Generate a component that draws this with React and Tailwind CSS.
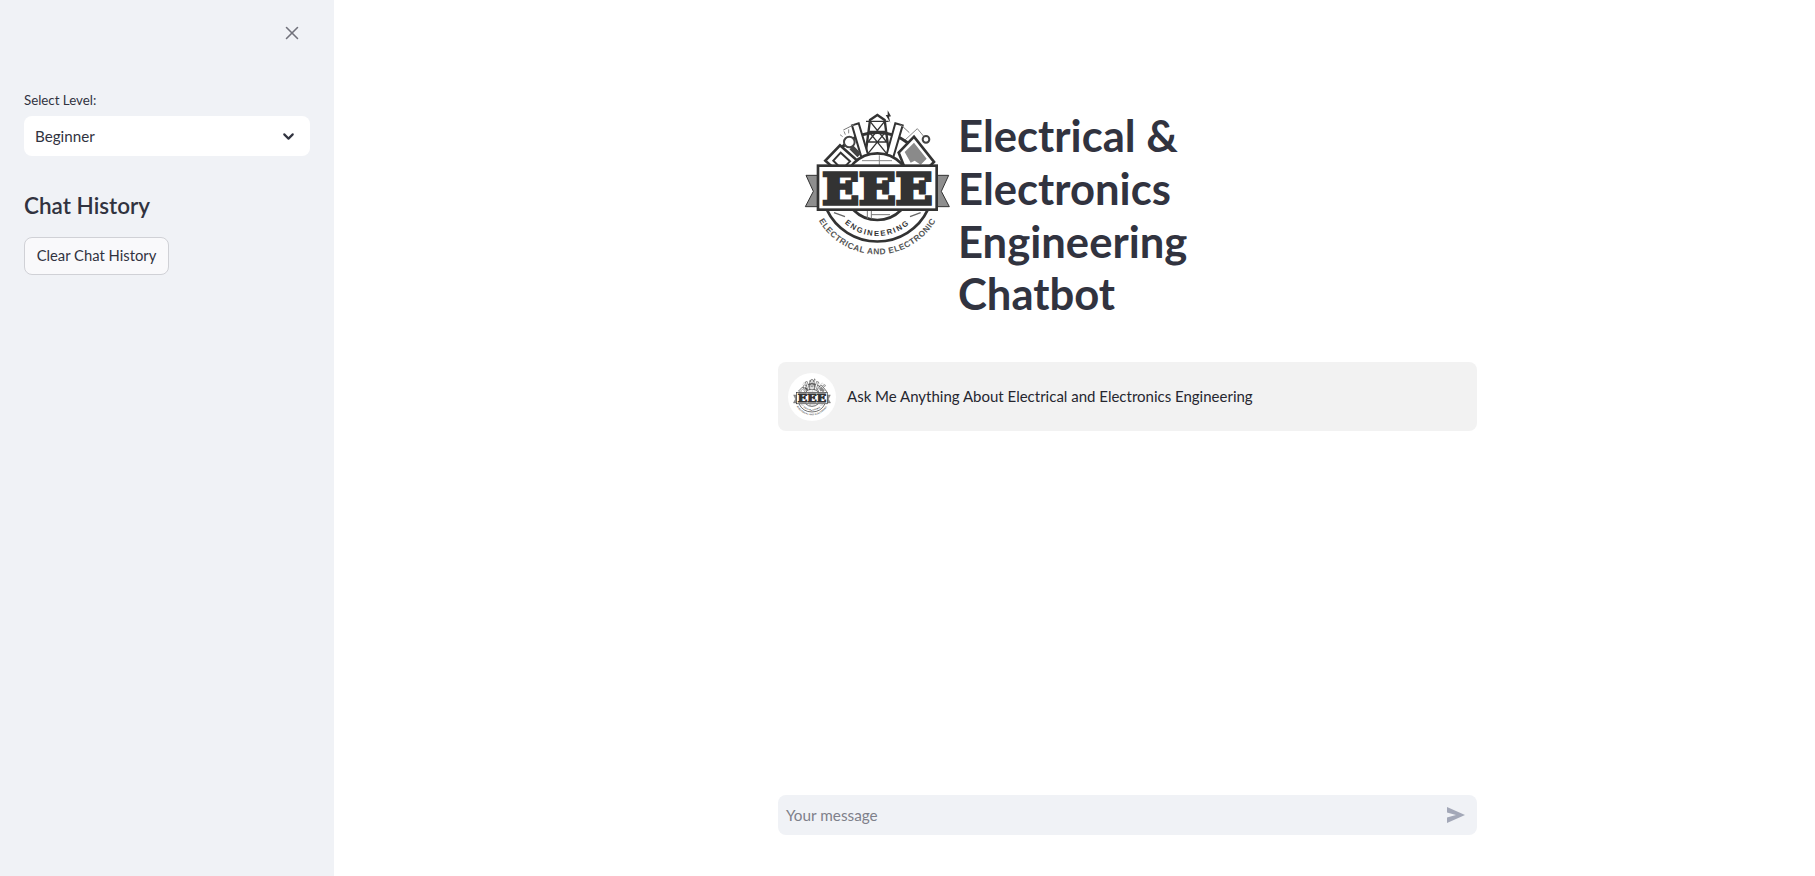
import { ChevronDown, X } from "lucide-react";

const Logo = ({ id, className }) => (
  <svg viewBox="30 20 465 465" className={className} aria-hidden="true">
    <defs>
      <path id={`${id}-inner`} d="M117 265 A145 145 0 0 0 407 265" />
      <path id={`${id}-outer`} d="M66 315 A203 203 0 0 0 458 315" />
    </defs>

    {/* wire and plug on the right */}
    <path d="M345 122 L382 88 L402 112" fill="none" stroke="#888" strokeWidth="3" />
    <circle cx="408" cy="120" r="10" fill="#fff" stroke="#444" strokeWidth="6" />

    {/* upper arc */}
    <path d="M116 215 A150 150 0 0 1 408 215" fill="none" stroke="#333" strokeWidth="9" />

    {/* tower */}
    <g fill="none" stroke="#333">
      <path d="M226 170 L240 62 L262 47 L284 62 L298 170" strokeWidth="7" />
      <path d="M228 66 H296 M236 96 H288 M232 128 H292 M240 66 L290 128 M284 66 L234 128 M236 96 L292 165 M288 96 L232 165" strokeWidth="4" />
    </g>
    <path d="M293 33 L303 51 L297 52 L301 70 L287 47 L293 47 Z" fill="#333" />
    <path d="M186 78 L206 72 L236 172 L216 180 Z" fill="#fff" stroke="#333" strokeWidth="6" />
    <path d="M316 72 L338 78 L308 180 L288 172 Z" fill="#fff" stroke="#333" strokeWidth="6" />
    <path d="M192 76 L160 92 M332 76 L358 100" stroke="#777" strokeWidth="3" />

    {/* bulb */}
    <path d="M162 96 L166 106 M176 90 L176 102 M150 106 L158 112" stroke="#888" strokeWidth="3" />
    <circle cx="178" cy="128" r="16" fill="#fff" stroke="#444" strokeWidth="6" />
    <path d="M184 144 L208 168" stroke="#444" strokeWidth="16" />

    {/* chip on the left */}
    <path d="M106 184 L150 138 L204 186 L160 232 Z" fill="#fff" stroke="#333" strokeWidth="8" />
    <path d="M130 184 L152 160 L180 186 L156 210 Z" fill="#fff" stroke="#333" strokeWidth="6" />

    {/* meter on the right */}
    <path d="M326 160 L372 112 L432 188 L400 220 H350 Z" fill="#fff" stroke="#333" strokeWidth="8" />
    <path d="M344 158 L372 130 L410 178 L392 196 L374 184 L362 190 Z" fill="#8a8a8a" />

    {/* inner disc */}
    <circle cx="262" cy="262" r="100" fill="#fff" stroke="#333" strokeWidth="8" />
    <path d="M216 184 H306 M268 168 V198" stroke="#888" strokeWidth="3" fill="none" />

    {/* ribbon tails */}
    <path d="M84 228 H48 L70 276 L46 322 H84 Z" fill="#8e8e8e" stroke="#333" strokeWidth="3" />
    <path d="M440 228 H476 L454 276 L478 322 H440 Z" fill="#8e8e8e" stroke="#333" strokeWidth="3" />

    {/* lower ring */}
    <path d="M110 330 A168 168 0 0 0 414 330" fill="none" stroke="#333" strokeWidth="8" />
    <path d="M132 340 L165 352 M392 340 L360 352" stroke="#666" strokeWidth="4" fill="none" />
    <path d="M232 332 V358 M244 332 V358 M244 346 H300" stroke="#777" strokeWidth="3" fill="none" />

    {/* banner */}
    <rect x="84" y="199" width="356" height="132" fill="#fff" stroke="#333" strokeWidth="8" />
    <text
      x="262"
      y="314"
      textAnchor="middle"
      textLength="330"
      lengthAdjust="spacingAndGlyphs"
      fill="#333"
      stroke="#333"
      strokeWidth="10"
      fontFamily="'DejaVu Serif', serif"
      fontWeight="700"
      fontSize="130"
    >
      EEE
    </text>

    {/* ring lettering */}
    <text fill="#333" fontFamily="'Liberation Sans', sans-serif" fontWeight="700" fontSize="23">
      <textPath href={`#${id}-inner`} startOffset="50%" textAnchor="middle" letterSpacing="5">
        ENGINEERING
      </textPath>
    </text>
    <text fill="#555" fontFamily="'Liberation Sans', sans-serif" fontWeight="700" fontSize="25">
      <textPath href={`#${id}-outer`} startOffset="50%" textAnchor="middle" letterSpacing="1.5">
        ELECTRICAL AND ELECTRONIC
      </textPath>
    </text>
  </svg>
);

const App = () => {
  return (
    <div className="flex h-[876px] overflow-hidden bg-white font-['Lato','Noto_Sans',sans-serif] text-[#31333f]">
      <aside className="flex w-[334px] shrink-0 flex-col bg-[#f0f2f6] px-6">
        <div className="flex justify-end pt-[22px] pr-[7px]">
          <X className="h-[22px] w-[22px] text-[#71727c]" strokeWidth={1.7} />
        </div>
        <label className="mt-[46px] text-[13.3px] leading-[20px]">Select Level:</label>
        <div className="mt-[6px] flex h-10 items-center justify-between rounded-lg bg-white pr-[13px] pl-[11px] text-[15.2px]">
          <span className="pt-[1px]">Beginner</span>
          <ChevronDown className="h-[17px] w-[17px] text-[#31333f]" strokeWidth={3} />
        </div>
        <h2 className="mt-[34px] text-[22.5px] leading-[32px] font-semibold">Chat History</h2>
        <button
          type="button"
          className="mt-[15px] h-[38px] w-[145px] rounded-lg border border-[#d0d1d6] bg-[#f9f9fb] pb-[2px] text-[14.8px]"
        >
          Clear Chat History
        </button>
      </aside>

      <main className="ml-[444px] flex w-[699px] flex-col">
        <div className="mt-[106px] flex items-start">
          <Logo id="main-logo" className="ml-[22px] h-[155px] w-[155px] shrink-0" />
          <h1 className="ml-[3px] w-[300px] pt-[3px] text-[43.6px] leading-[52.8px] font-bold">
            Electrical &amp; Electronics Engineering Chatbot
          </h1>
        </div>

        <div className="mt-[42px] flex h-[69px] items-center rounded-lg bg-[#f2f2f2] pl-[10px]">
          <div className="flex h-12 w-12 shrink-0 items-center justify-center rounded-full bg-white">
            <Logo id="avatar-logo" className="h-10 w-10" />
          </div>
          <p className="ml-[11px] pb-[1px] text-[15px] text-[#262730]">
            Ask Me Anything About Electrical and Electronics Engineering
          </p>
        </div>

        <div className="mt-auto mb-[41px] flex h-10 items-center justify-between rounded-lg bg-[#f0f2f6] pr-[11px] pl-2">
          <span className="pt-[1px] text-[15.3px] text-[#7e808a]">Your message</span>
          <svg viewBox="0 0 18 16" className="h-[16px] w-[20px] fill-[#a3a8b8]" aria-hidden="true">
            <path d="M0 0 L18 8 L0 16 L0 10.5 L9 8 L0 5.5 Z" />
          </svg>
        </div>
      </main>
    </div>
  );
};

export default App;
